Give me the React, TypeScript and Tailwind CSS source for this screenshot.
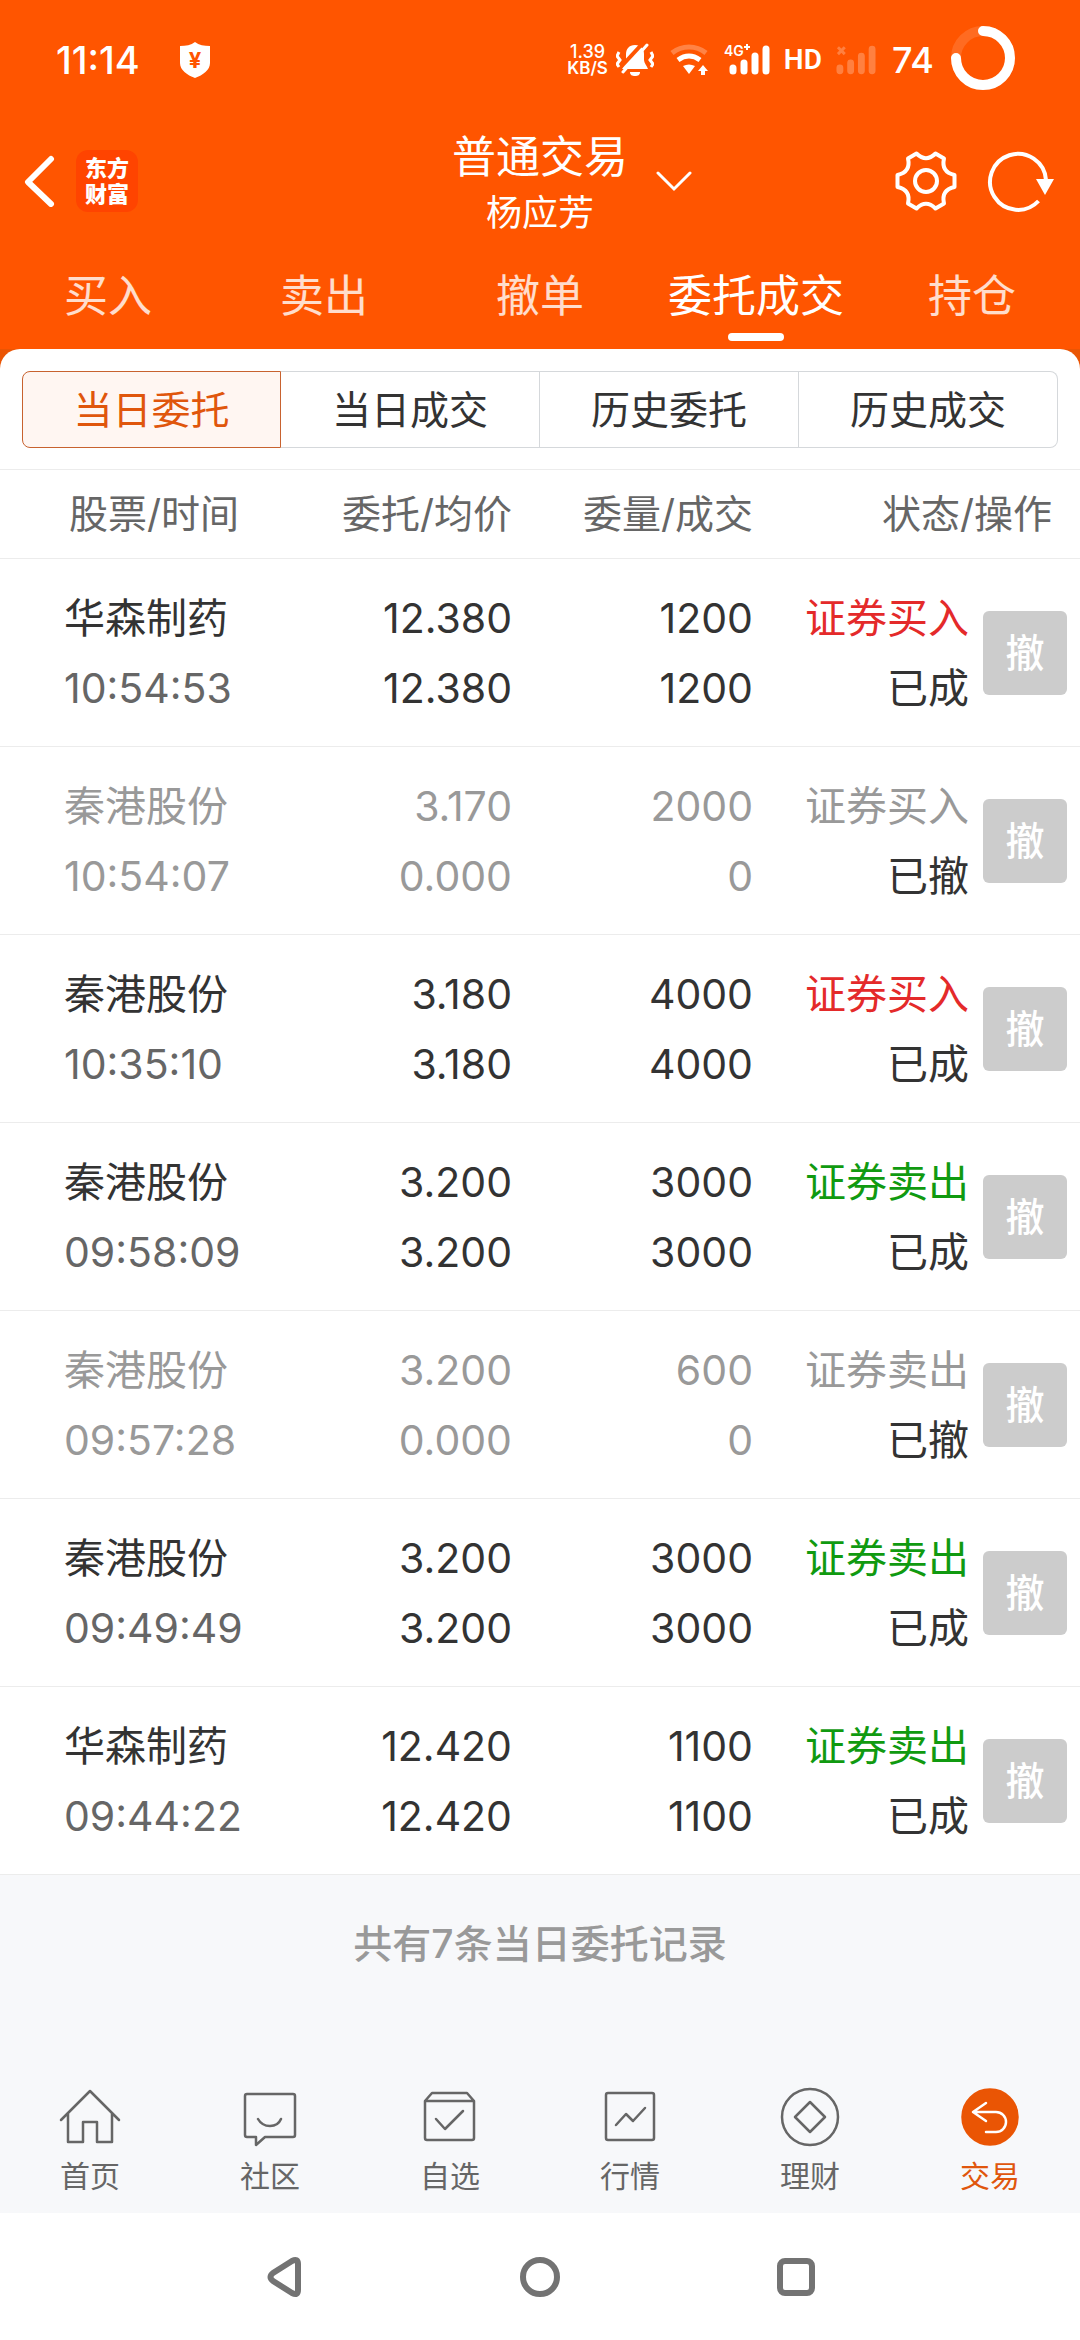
import type { ReactNode } from 'react';
import { clsx } from 'clsx';

type Order = {
  name: string;
  time: string;
  price: string;
  avgPrice: string;
  amount: string;
  filled: string;
  side: 'buy' | 'sell';
  cancelled?: boolean;
};

const orders: Order[] = [
  { name: '华森制药', time: '10:54:53', price: '12.380', avgPrice: '12.380', amount: '1200', filled: '1200', side: 'buy' },
  { name: '秦港股份', time: '10:54:07', price: '3.170', avgPrice: '0.000', amount: '2000', filled: '0', side: 'buy', cancelled: true },
  { name: '秦港股份', time: '10:35:10', price: '3.180', avgPrice: '3.180', amount: '4000', filled: '4000', side: 'buy' },
  { name: '秦港股份', time: '09:58:09', price: '3.200', avgPrice: '3.200', amount: '3000', filled: '3000', side: 'sell' },
  { name: '秦港股份', time: '09:57:28', price: '3.200', avgPrice: '0.000', amount: '600', filled: '0', side: 'sell', cancelled: true },
  { name: '秦港股份', time: '09:49:49', price: '3.200', avgPrice: '3.200', amount: '3000', filled: '3000', side: 'sell' },
  { name: '华森制药', time: '09:44:22', price: '12.420', avgPrice: '12.420', amount: '1100', filled: '1100', side: 'sell' },
];

const tabs = ['买入', '卖出', '撤单', '委托成交', '持仓'];
const segments = ['当日委托', '当日成交', '历史委托', '历史成交'];

function SignalBars() {
  return (
    <g stroke="currentColor" strokeWidth="7" strokeLinecap="round">
      <path d="M9 24v3M20 19v8M31 12v15M42 5v22" />
    </g>
  );
}

function StatusBar() {
  return (
    <div className="flex h-[120px] items-center justify-between pr-16 pl-14">
      <div className="flex items-center gap-10">
        <span className="text-[38px] leading-10 font-medium">11:14</span>
        <svg viewBox="0 0 30 36" className="h-9 w-[30px]">
          <path d="M15 0c4 3 9 4 15 4v17c0 7-7 12-15 15C7 33 0 28 0 21V4c6 0 11-1 15-4Z" fill="#fff" />
          <text x="15" y="26" textAnchor="middle" fontSize="22" fontWeight="700" fill="#ff5500">¥</text>
        </svg>
      </div>
      <div className="flex items-center gap-4">
        <div className="flex flex-col items-center leading-4">
          <span className="text-[18px] font-medium">1.39</span>
          <span className="text-[17px] font-semibold">KB/S</span>
        </div>
        <svg viewBox="0 0 38 34" className="-ml-2 h-[34px] w-[38px]" fill="none">
          <path d="M19 2c-6 0-9 4-9 9v6c0 3-3 6-4 9h26c-1-3-4-6-4-9v-6c0-5-3-9-9-9Z" fill="#fff" />
          <path d="M14 29h10c0 3-2 4-5 4s-5-1-5-4Z" fill="#fff" />
          <path d="M28-1 3 26" stroke="#ff5500" strokeWidth="4" />
          <path d="M31 2 7 29" stroke="#fff" strokeWidth="3" strokeLinecap="round" />
          <path d="m3 9-2 4 3 4-3 4 2 3M35 9l2 4-3 4 3 4-2 3" stroke="#fff" strokeWidth="3" />
        </svg>
        <svg viewBox="0 0 38 32" className="h-8 w-[38px]" fill="none">
          <path d="M2 9c10-8 24-8 34 0" stroke="#fff" strokeOpacity="0.27" strokeWidth="5" />
          <path d="M8 16c7-5 15-5 22 0" stroke="#fff" strokeWidth="5" />
          <path d="M13 22c4-2 8-2 12 0l-6 8-6-8Z" fill="#fff" />
          <path d="M31 31v-4h-3l5-6 5 6h-3v4Z" fill="#fff" />
        </svg>
        <svg viewBox="0 -8 46 48" className="h-12 w-[46px]">
          <text x="0" y="12" fontSize="14" fontWeight="600" fill="#fff">4G</text>
          <path d="M23 0v6M20 3h6" stroke="#fff" strokeWidth="2" />
          <SignalBars />
        </svg>
        <span className="flex w-[34px] justify-center font-[Roboto] text-[28px] leading-8 font-semibold">HD</span>
        <svg viewBox="5 0 41 32" className="h-8 w-10 opacity-25">
          <path d="m7 3 7 7M14 3l-7 7" stroke="#fff" strokeWidth="3" />
          <SignalBars />
        </svg>
        <span className="text-[36px] leading-10 font-medium">74</span>
        <svg viewBox="0 0 66 66" className="-mt-1 size-[66px]" fill="none" stroke="#fff" strokeWidth="10">
          <circle cx="33" cy="33" r="27" strokeOpacity="0.13" />
          <path d="M33 6a27 27 0 1 1-27 27" strokeLinecap="round" />
        </svg>
      </div>
    </div>
  );
}

function TitleBar() {
  return (
    <div className="grid h-[122px] grid-cols-[1fr_auto_1fr] items-center">
      <div className="flex items-center gap-5 pl-6">
        <button type="button" aria-label="返回">
          <svg viewBox="0 0 32 52" className="h-[52px] w-8" fill="none" stroke="#fff" strokeWidth="6" strokeLinecap="round" strokeLinejoin="round">
            <path d="M27 4 4 27l23 22" />
          </svg>
        </button>
        <a href="#home" className="flex size-[62px] flex-col items-center justify-center rounded-xl bg-[#ff4400] text-[22px] leading-[26px] font-black">
          <span>东方</span>
          <span>财富</span>
        </a>
      </div>
      <div className="flex flex-col items-center pt-2">
        <h1 className="text-[44px] leading-14">普通交易</h1>
        <p className="text-[36px] leading-14">杨应芳</p>
      </div>
      <div className="flex items-center justify-between pr-6 pl-7">
        <button type="button" aria-label="切换交易类型">
          <svg viewBox="0 0 36 22" className="h-[22px] w-9" fill="none" stroke="#fff" strokeWidth="3" strokeLinecap="round">
            <path d="m2 3 16 16L34 3" />
          </svg>
        </button>
        <div className="flex items-center gap-7">
          <button type="button" aria-label="设置">
            <svg viewBox="-32 -32 64 64" className="size-16" fill="none" stroke="#fff" strokeWidth="4" strokeLinejoin="round">
              <path d="M-9.5-27.5Q0-18 9.5-27.5L18-22.5Q15-9 28.5-6V6Q15 9 18 22.5L9.5 27.5Q0 18-9.5 27.5L-18 22.5Q-15 9-28.5 6V-6Q-15-9-18-22.5Z" />
              <circle r="11" />
            </svg>
          </button>
          <button type="button" aria-label="刷新">
            <svg viewBox="0 0 70 64" className="h-16 w-[70px]" fill="none">
              <path d="M60 31A28 28 0 1 0 52.5 52" stroke="#fff" strokeWidth="4" />
              <path d="M50 30h18l-9 16Z" fill="#fff" />
            </svg>
          </button>
        </div>
      </div>
    </div>
  );
}

function TradeTabs() {
  return (
    <nav className="grid h-[107px] grid-cols-5">
      {tabs.map((tab) => {
        const active = tab === '委托成交';
        return (
          <button key={tab} type="button" className={clsx('relative text-[44px] leading-14', active ? 'text-white' : 'text-white/80')}>
            {tab}
            {active ? <span className="absolute bottom-2 left-1/2 h-2 w-14 -translate-x-1/2 rounded-full bg-white" /> : null}
          </button>
        );
      })}
    </nav>
  );
}

function Segments() {
  return (
    <div className="grid grid-cols-4 px-[22px] pt-[22px] pb-[21px]">
      {segments.map((label, index) => (
        <button
          key={label}
          type="button"
          className={clsx(
            'h-[77px] border text-[39px] leading-12',
            index === 0 ? 'rounded-l-lg border-[#c8622f] bg-[#fff6f2] text-[#e0560c]' : 'border-l-0 border-[#d5d8db] text-[#333333]',
            index === segments.length - 1 && 'rounded-r-lg',
          )}
        >
          {label}
        </button>
      ))}
    </div>
  );
}

function OrderRow({ order }: { order: Order }) {
  const muted = order.cancelled;
  const sideColor = order.side === 'buy' ? 'text-[#e42a2a]' : 'text-[#109a10]';

  return (
    <tr className={clsx('h-[188px] border-b border-[#ececec] text-right text-[41px] leading-[70px]', muted ? 'text-[#999999]' : 'text-[#333333]')}>
      <td className="pl-16 text-left">
        <div>{order.name}</div>
        <div className={clsx(!muted && 'text-[#666666]')}>{order.time}</div>
      </td>
      <td>
        <div>{order.price}</div>
        <div>{order.avgPrice}</div>
      </td>
      <td>
        <div>{order.amount}</div>
        <div>{order.filled}</div>
      </td>
      <td>
        <div className={clsx(!muted && sideColor)}>{order.side === 'buy' ? '证券买入' : '证券卖出'}</div>
        <div className="text-[#333333]">{muted ? '已撤' : '已成'}</div>
      </td>
      <td className="pl-[14px] align-middle">
        <button type="button" disabled className="flex size-[84px] items-center justify-center rounded-md bg-[#cccccc] text-[39px] leading-12 font-medium text-white">
          撤
        </button>
      </td>
    </tr>
  );
}

function OrderTable() {
  return (
    <table className="w-full table-fixed border-collapse bg-white">
      <colgroup>
        <col />
        <col className="w-[240px]" />
        <col className="w-[241px]" />
        <col className="w-[216px]" />
        <col className="w-[111px]" />
      </colgroup>
      <thead>
        <tr className="h-[89px] border-y border-[#ececec] text-right text-[39px] leading-12 text-[#666666]">
          <th className="pl-[69px] text-left font-normal">股票/时间</th>
          <th className="font-normal">委托/均价</th>
          <th className="font-normal">委量/成交</th>
          <th colSpan={2} className="pr-7 font-normal">状态/操作</th>
        </tr>
      </thead>
      <tbody>
        {orders.map((order) => (
          <OrderRow key={order.time} order={order} />
        ))}
      </tbody>
    </table>
  );
}

function NavItem({ label, active, children }: { label: string; active?: boolean; children: ReactNode }) {
  return (
    <a href={`#${label}`} className={clsx('flex flex-col items-center gap-[9px] text-[30px] leading-9', active ? 'text-[#e0560c]' : 'text-[#666666]')}>
      <svg viewBox="0 0 64 64" className="size-16" fill="none" stroke="currentColor" strokeWidth="2.5" strokeLinecap="round" strokeLinejoin="round">
        {children}
      </svg>
      {label}
    </a>
  );
}

function BottomNav() {
  return (
    <nav className="grid grid-cols-6 bg-[#f7f8fa] pb-[19px]">
      <NavItem label="首页">
        <path d="M3 35 32 6l29 29M10 29v28h15V37h14v20h15V29" />
      </NavItem>
      <NavItem label="社区">
        <path d="M9 9h46q2 0 2 2v39q0 2-2 2H27l-9 8v-8H9q-2 0-2-2V11q0-2 2-2ZM20 34q4 7 12 7t11-7" />
      </NavItem>
      <NavItem label="自选">
        <path d="M7 16 14 8h35l7 8v37q0 2-2 2H9q-2 0-2-2ZM7 16h49M18 34l9 10 18-18" />
      </NavItem>
      <NavItem label="行情">
        <path d="M10 8h44q2 0 2 2v43q0 2-2 2H10q-2 0-2-2V10q0-2 2-2ZM18 40l10-11 7 7 12-13" />
      </NavItem>
      <NavItem label="理财">
        <circle cx="32" cy="32" r="28" />
        <path d="m32 17 15 15-15 15-15-15Z" />
      </NavItem>
      <NavItem label="交易" active>
        <circle cx="32" cy="32" r="27.5" fill="#ea5504" stroke="#ea5504" />
        <path d="M28 18 15 27l13 9M16 27h22a10 10 0 0 1 0 20H28" stroke="#fff" />
      </NavItem>
    </nav>
  );
}

function SystemNav() {
  return (
    <div className="flex h-[127px] items-center justify-center gap-48 bg-white text-[#737373]">
      <button type="button" aria-label="后退" className="flex w-16 justify-center">
        <svg viewBox="0 0 40 44" className="h-11 w-10" fill="none" stroke="currentColor" strokeWidth="6" strokeLinejoin="round">
          <path d="M28 6q6-3 6 3v26q0 6-6 3L9 26q-5-4 0-8Z" />
        </svg>
      </button>
      <button type="button" aria-label="主屏幕" className="flex w-16 justify-center">
        <svg viewBox="0 0 44 44" className="size-11" fill="none" stroke="currentColor" strokeWidth="6">
          <circle cx="22" cy="22" r="17" />
        </svg>
      </button>
      <button type="button" aria-label="最近任务" className="flex w-16 justify-center">
        <svg viewBox="0 0 44 44" className="size-11" fill="none" stroke="currentColor" strokeWidth="6">
          <rect x="6" y="6" width="32" height="32" rx="5" />
        </svg>
      </button>
    </div>
  );
}

export default function App() {
  return (
    <div className="flex min-h-screen flex-col bg-white font-['Inter','Noto_Sans_CJK_SC',sans-serif]">
      <header className="bg-[#ff5500] text-white">
        <StatusBar />
        <TitleBar />
        <TradeTabs />
      </header>
      <main className="flex flex-1 flex-col bg-[#f7f8fa]">
        <div className="bg-[#ea5504]">
          <div className="rounded-t-[20px] bg-white">
            <Segments />
          </div>
        </div>
        <OrderTable />
        <p className="pt-12 text-center text-[39px] leading-[42px] font-medium text-[#999999]">共有7条当日委托记录</p>
      </main>
      <BottomNav />
      <SystemNav />
    </div>
  );
}
